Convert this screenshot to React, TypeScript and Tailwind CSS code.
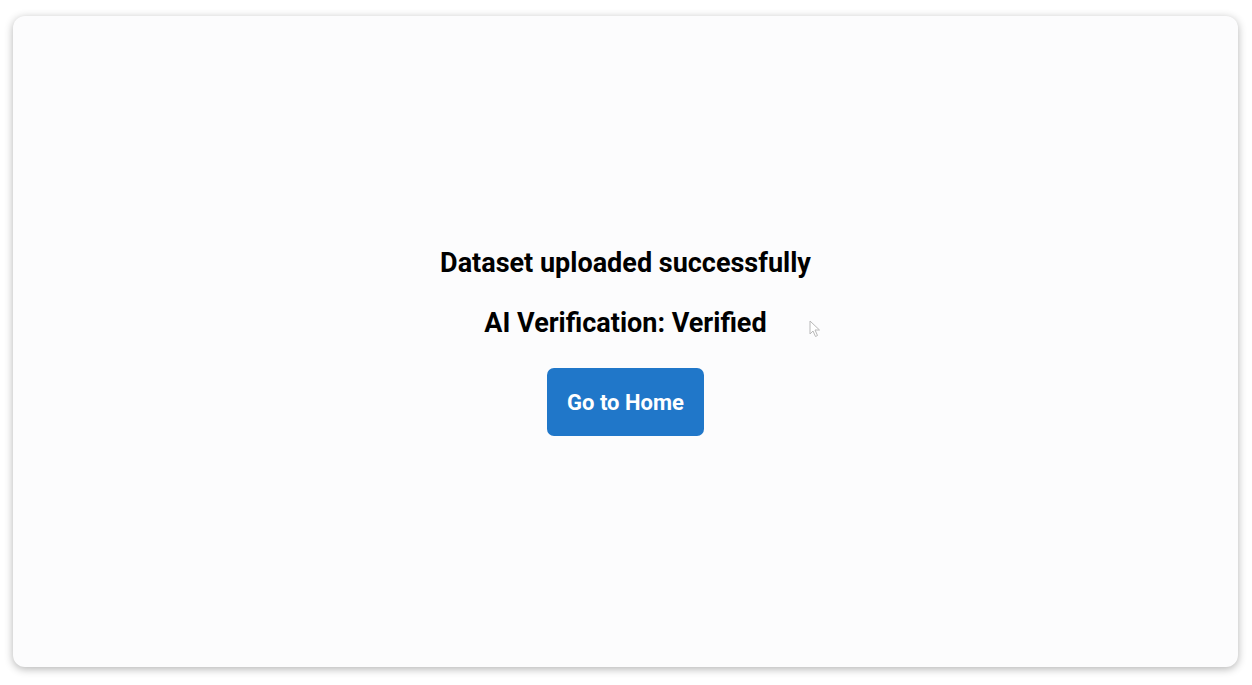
import React from "react";

export default function App() {
  return (
    <div className="w-[1252px] h-[685px] bg-white pt-[16px] pl-[13px] pr-[14px] pb-[18px]" style={{ fontFamily: "Roboto, 'Noto Sans', sans-serif" }}>
      <div className="relative h-full w-full rounded-[12px] bg-[#fcfcfd] shadow-[0_2px_9px_rgba(0,0,0,0.3)] flex flex-col items-center justify-center">
        <h2 className="text-[27px] leading-[32px] font-bold text-black">Dataset uploaded successfully</h2>
        <h2 className="mt-[28px] text-[27px] leading-[32px] font-bold text-black">AI Verification: Verified</h2>
        <button className="mt-[29px] w-[157px] h-[68px] rounded-[7px] bg-[#2077c9] text-white text-[22px] font-bold">Go to Home</button>
        <svg className="absolute left-[796px] top-[304px]" width="14" height="20" viewBox="0 0 14 20">
          <path d="M1 1 L1 14 L4 11 L6.5 16.5 L8.5 15.5 L6 10 L10.5 10 Z" fill="#fff" stroke="#b8b8b8" strokeWidth="1" />
        </svg>
      </div>
    </div>
  );
}
